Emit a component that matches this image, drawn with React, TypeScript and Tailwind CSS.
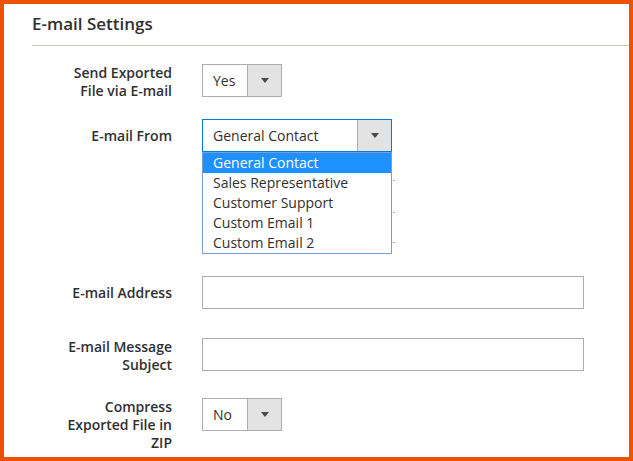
const font = { fontFamily: '"Open Sans", "Liberation Sans", sans-serif' };

function Arrow() {
  return (
    <svg width="8" height="5" viewBox="0 0 8 5" className="block">
      <path d="M0 0H8L4 5Z" fill="#514943" />
    </svg>
  );
}

function Select({ value, width, focused }: { value: string; width: string; focused?: boolean }) {
  return (
    <div
      className={`flex h-[33px] ${width} border bg-white ${
        focused ? 'border-[#007bdb]' : 'border-[#adadad]'
      }`}
    >
      <div className="flex flex-1 items-center pl-[10px] text-[14px] text-[#303030]">{value}</div>
      <div className="flex w-[34px] items-center justify-center border-l border-[#adadad] bg-[#e3e3e3]">
        <Arrow />
      </div>
    </div>
  );
}

function Label({ children, pt = 'pt-0' }: { children: React.ReactNode; pt?: string }) {
  return (
    <div
      className={`w-[140px] shrink-0 text-right text-[14px] font-semibold leading-[18px] text-[#303030] ${pt}`}
    >
      {children}
    </div>
  );
}

const options = [
  'General Contact',
  'Sales Representative',
  'Customer Support',
  'Custom Email 1',
  'Custom Email 2',
];

export default function App() {
  return (
    <div
      className="h-[461px] w-[633px] overflow-hidden border-4 border-[#eb5202] bg-white"
      style={font}
    >
      <div className="pl-[28px]">
        {/* Title */}
        <div className="border-b border-[#ccc5c0] pb-[10px] pt-[9px]">
          <h2 className="text-[17px] font-semibold leading-[22px] text-[#303030]">E-mail Settings</h2>
        </div>

        {/* Send Exported File via E-mail */}
        <div className="mt-[18px] flex">
          <Label>
            Send Exported
            <br />
            File via E-mail
          </Label>
          <div className="ml-[30px]">
            <Select value="Yes" width="w-[80px]" />
          </div>
        </div>

        {/* E-mail From */}
        <div className="mt-[19px] flex">
          <Label pt="pt-[8px]">E-mail From</Label>
          <div className="relative ml-[30px]">
            <Select value="General Contact" width="w-[190px]" focused />
            <div className="absolute left-0 top-full z-10 w-[190px] border border-[#7b9bd3] bg-white">
              {options.map((o, i) => (
                <div
                  key={o}
                  className={`h-[20px] pl-[10px] text-[14px] leading-[20px] ${
                    i === 0 ? 'bg-[#1e90ff] text-white' : 'text-[#303030]'
                  }`}
                >
                  {o}
                </div>
              ))}
            </div>
            <div className="absolute left-[191px] top-[61px] h-px w-[2px] bg-[#adadad]" />
            <div className="absolute left-[191px] top-[93px] h-px w-[2px] bg-[#adadad]" />
            <div className="absolute left-[191px] top-[123px] h-px w-[2px] bg-[#adadad]" />
          </div>
        </div>

        {/* E-mail Address */}
        <div className="mt-[124px] flex">
          <Label pt="pt-[8px]">E-mail Address</Label>
          <div className="ml-[30px] h-[33px] w-[382px] border border-[#adadad] bg-white" />
        </div>

        {/* E-mail Message Subject */}
        <div className="mt-[29px] flex">
          <Label>
            E-mail Message
            <br />
            Subject
          </Label>
          <div className="ml-[30px] h-[33px] w-[382px] border border-[#adadad] bg-white" />
        </div>

        {/* Compress Exported File in ZIP */}
        <div className="mt-[24px] flex">
          <Label>
            Compress
            <br />
            Exported File in
            <br />
            ZIP
          </Label>
          <div className="ml-[30px]">
            <Select value="No" width="w-[80px]" />
          </div>
        </div>
      </div>
    </div>
  );
}
